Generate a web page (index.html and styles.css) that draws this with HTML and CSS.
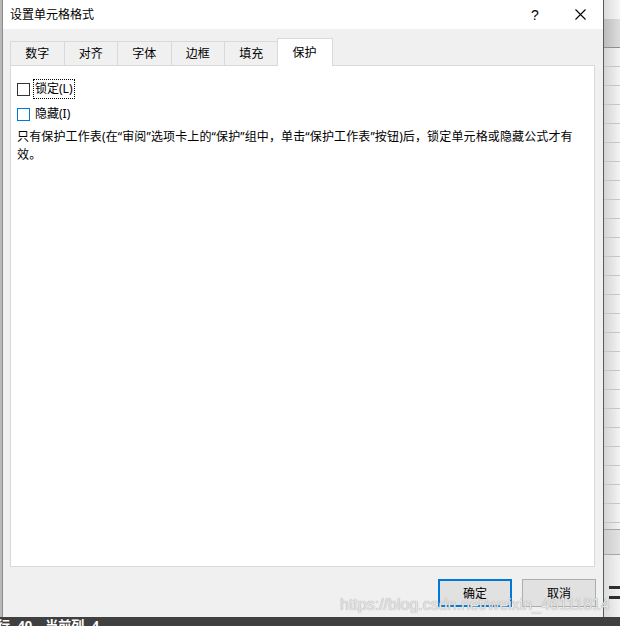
FILE: index.html
```html
<!DOCTYPE html>
<html lang="zh-CN">
<head>
<meta charset="utf-8">
<title>设置单元格格式</title>
<link rel="stylesheet" href="styles.css">
</head>
<body>
<div class="screen">
  <div class="desk">
    <div class="edge"></div>
    <div class="dialog">
      <div class="titlebar">
        <span class="title">设置单元格格式</span>
        <span class="tb-btn tb-help">?</span>
        <span class="tb-btn tb-close">
          <svg width="11" height="11" viewBox="0 0 11 11"><path d="M0.5 0.5 L10.5 10.5 M10.5 0.5 L0.5 10.5" stroke="#000" stroke-width="1.1" fill="none"/></svg>
        </span>
      </div>
      <div class="body">
        <div class="tabs">
          <div class="tab">数字</div>
          <div class="tab">对齐</div>
          <div class="tab">字体</div>
          <div class="tab">边框</div>
          <div class="tab">填充</div>
          <div class="tab tab-active">保护</div>
        </div>
        <div class="panel">
          <div class="check"><span class="box"></span><span class="lbl lbl-focus">锁定(L)</span></div>
          <div class="check"><span class="box box-hover"></span><span class="lbl">隐藏(I)</span></div>
          <p class="note">只有保护工作表(在“审阅”选项卡上的“保护”组中，单击“保护工作表”按钮)后，锁定单元格或隐藏公式才有效。</p>
        </div>
        <div class="footer">
          <button class="btn btn-default">确定</button>
          <button class="btn">取消</button>
        </div>
      </div>
    </div>
    <div class="sheet">
      <div class="sheet-top"></div>
      <div class="sheet-head"></div>
      <div class="sheet-rows"></div>
      <div class="sheet-foot"></div>
      <div class="sheet-bottom"></div>
    </div>
  </div>
  <div class="status">行 40，当前列 4</div>
  <div class="watermark">https://blog.csdn.net/weixin_46111814</div>
</div>
</body>
</html>
```
FILE: styles.css
```css
html, body {
  margin: 0;
  padding: 0;
}
body {
  width: 620px;
  height: 626px;
  overflow: hidden;
  font-family: "Noto Sans", "Noto Sans CJK SC", sans-serif;
  font-size: 12px;
  color: #000;
}
.screen {
  position: relative;
  width: 620px;
  height: 626px;
  display: flex;
  flex-direction: column;
  background: #404040;
}
.desk {
  display: flex;
  height: 617px;
}
.edge {
  width: 2px;
  background: #b8b8b8;
}
.dialog {
  width: 600px;
  border-left: 1px solid #8c8c8c;
  border-right: 1px solid #5a5a5a;
  display: flex;
  flex-direction: column;
  background: #f0f0f0;
}
.titlebar {
  height: 29px;
  background: #fff;
  display: flex;
  align-items: center;
}
.title {
  flex: 1;
  padding-left: 7px;
  line-height: 16px;
}
.tb-btn {
  height: 29px;
  display: flex;
  align-items: center;
  justify-content: center;
}
.tb-help {
  width: 46px;
  font-family: "Liberation Sans", sans-serif;
  font-size: 14px;
}
.tb-close {
  width: 45px;
}
.body {
  flex: 1;
  display: flex;
  flex-direction: column;
}
.tabs {
  display: flex;
  align-items: flex-end;
  height: 27px;
  margin: 9px 0 0 7px;
  position: relative;
  z-index: 1;
}
.tab {
  box-sizing: border-box;
  height: 24px;
  padding: 0 14.25px;
  border: 1px solid #d9d9d9;
  border-bottom: 0;
  margin-right: -1px;
  display: flex;
  align-items: center;
  justify-content: center;
  line-height: 16px;
  background: #f0f0f0;
}
.tab-active {
  height: 28px;
  margin: 0 -1px -1px -1px;
  padding: 0 15px;
  background: #fff;
  position: relative;
  z-index: 1;
}
.panel {
  flex: 1;
  margin: 0 8px 0 7px;
  background: #fff;
  border: 1px solid #d9d9d9;
  padding: 13px 6px 0 6px;
  display: flex;
  flex-direction: column;
  gap: 5px;
}
.check {
  display: flex;
  align-items: center;
  height: 20px;
}
.box {
  width: 13px;
  height: 13px;
  box-sizing: border-box;
  border: 1px solid #333;
  margin-right: 3px;
  background: #fff;
}
.box-hover {
  border-color: #0078d7;
}
.lbl {
  line-height: 18px;
  padding: 0 1px;
  border: 1px solid transparent;
}
.lbl-focus {
  border: 1px dotted #000;
}
.note {
  margin: -1px 0 0 0;
  line-height: 18px;
  letter-spacing: 0.13px;
}
.footer {
  height: 50px;
  box-sizing: border-box;
  display: flex;
  justify-content: flex-end;
  align-items: flex-start;
  gap: 10px;
  padding: 12px 7px 0 0;
}
.btn {
  width: 74px;
  height: 28px;
  box-sizing: border-box;
  border: 1px solid #adadad;
  background: #e1e1e1;
  font-family: inherit;
  font-size: 12px;
  color: #000;
  padding: 0;
  margin: 0;
}
.btn-default {
  border: 2px solid #0078d7;
}
.sheet {
  width: 16px;
  display: flex;
  flex-direction: column;
}
.sheet-top {
  height: 19px;
  background: linear-gradient(to right, #dcdcdc, #f6f6f6);
}
.sheet-head {
  height: 28px;
  border-bottom: 1px solid #8f8f8f;
  background: linear-gradient(to right, #bcbcbc, #dedede);
}
.sheet-rows {
  height: 481px;
  background:
    repeating-linear-gradient(to bottom, transparent 0 18px, #c6c6c6 18px 19px),
    linear-gradient(to right, #d4d4d4, #f4f4f4);
}
.sheet-foot {
  height: 24px;
  border-top: 1px solid #a6a6a6;
  border-bottom: 1px solid #a6a6a6;
  background: linear-gradient(to right, #cdcdcd, #e2e2e2);
}
.sheet-bottom {
  flex: 1;
  background:
    linear-gradient(#2e2e2e, #2e2e2e) no-repeat 5px 31px / 11px 3px,
    linear-gradient(#2e2e2e, #2e2e2e) no-repeat 5px 41px / 11px 3px,
    linear-gradient(to right, #dcdcdc, #f2f2f2);
}
.status {
  flex: 1;
  background: #404040;
  color: #fff;
  font-family: "Noto Sans", "Noto Sans CJK SC", sans-serif;
  font-size: 13px;
  font-weight: bold;
  line-height: 13px;
  padding-top: 2px;
  text-indent: -3px;
  word-spacing: 4px;
  white-space: nowrap;
  overflow: hidden;
}
.watermark {
  position: absolute;
  left: 340px;
  top: 597px;
  font-family: "Liberation Sans", sans-serif;
  font-size: 16px;
  line-height: 16px;
  color: #e6e6e6;
  text-shadow: 0 0 1px #8a8a8a;
  white-space: nowrap;
}
```
